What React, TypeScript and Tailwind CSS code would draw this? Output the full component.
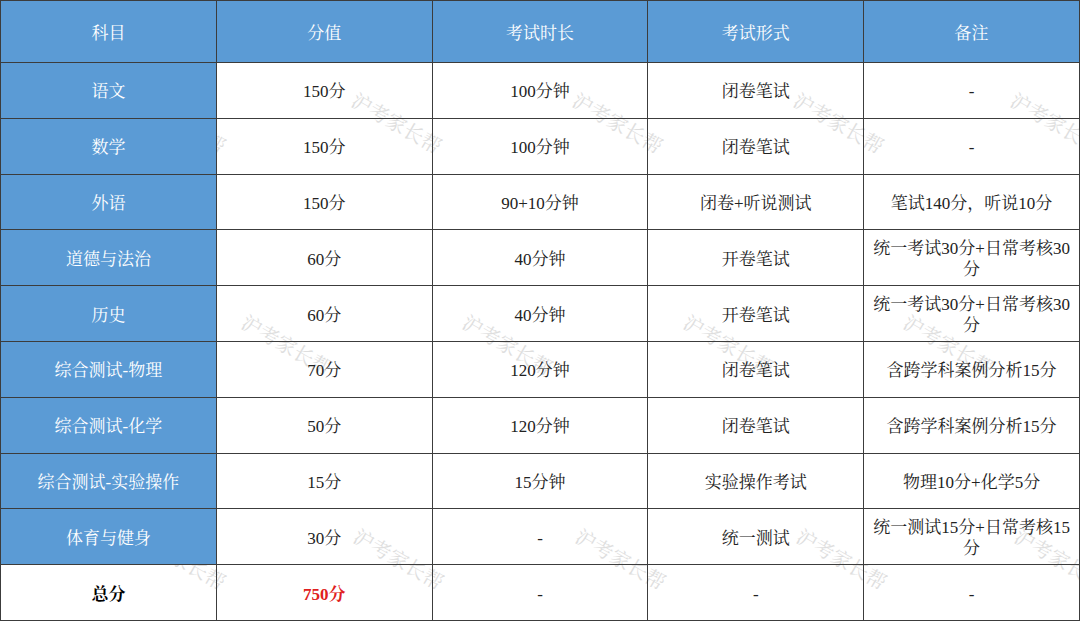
import { Fragment, type ReactNode } from "react";

const filas: { materia: string; celdas: string[] }[] = [
  { materia: "语文", celdas: ["150分", "100分钟", "闭卷笔试", "-"] },
  { materia: "数学", celdas: ["150分", "100分钟", "闭卷笔试", "-"] },
  { materia: "外语", celdas: ["150分", "90+10分钟", "闭卷+听说测试", "笔试140分，听说10分"] },
  { materia: "道德与法治", celdas: ["60分", "40分钟", "开卷笔试", "统一考试30分+日常考核30分"] },
  { materia: "历史", celdas: ["60分", "40分钟", "开卷笔试", "统一考试30分+日常考核30分"] },
  { materia: "综合测试-物理", celdas: ["70分", "120分钟", "闭卷笔试", "含跨学科案例分析15分"] },
  { materia: "综合测试-化学", celdas: ["50分", "120分钟", "闭卷笔试", "含跨学科案例分析15分"] },
  { materia: "综合测试-实验操作", celdas: ["15分", "15分钟", "实验操作考试", "物理10分+化学5分"] },
  { materia: "体育与健身", celdas: ["30分", "-", "统一测试", "统一测试15分+日常考核15分"] },
];

const cabecera = ["科目", "分值", "考试时长", "考试形式", "备注"];

// marcas de agua: punto de arranque del primer carácter, tres filas escalonadas
const marcas: [number, number][] = [
  [142, 90], [358, 90], [579, 90], [800, 90], [1017, 90],
  [248, 312], [469, 312], [690, 312], [910, 312],
  [-84, 526], [142, 526], [360, 526], [582, 526], [803, 526], [1021, 526],
];

function Celda({
  children,
  azul,
  className = "",
}: {
  children: ReactNode;
  azul?: boolean;
  className?: string;
}) {
  // las celdas blancas son transparentes: la marca de agua se ve sólo ahí
  return (
    <div
      className={`flex items-center justify-center border-r border-b border-[#3c3c3c] px-2 pt-[3px] text-center text-[17px] leading-[21px] ${
        azul ? "bg-[#5b9bd5] text-white" : "text-[#222]"
      } ${className}`}
    >
      {children}
    </div>
  );
}

export default function App() {
  return (
    <div className="relative h-[621px] w-[1080px] overflow-hidden bg-white font-['Liberation_Serif','Noto_Serif_CJK_SC','Noto_Sans_CJK_SC',serif]">
      <div className="pointer-events-none absolute inset-0" aria-hidden="true">
        {marcas.map(([x, y], i) => (
          <span
            key={i}
            className="absolute origin-top-left rotate-[30deg] whitespace-nowrap text-[20px] leading-[20px] text-[#dedede]"
            style={{ left: x, top: y }}
          >
            沪考家长帮
          </span>
        ))}
      </div>

      <div className="relative grid h-full grid-cols-5 grid-rows-[62px_repeat(10,1fr)] border-t border-l border-[#3c3c3c]">
        {cabecera.map((c) => (
          <Celda key={c} azul>
            {c}
          </Celda>
        ))}
        {filas.map((f) => (
          <Fragment key={f.materia}>
            <Celda azul>{f.materia}</Celda>
            {f.celdas.map((c, i) => (
              <Celda key={i}>{c}</Celda>
            ))}
          </Fragment>
        ))}
        <Celda className="font-bold text-black">总分</Celda>
        <Celda className="font-bold text-[#e02020]">750分</Celda>
        <Celda>-</Celda>
        <Celda>-</Celda>
        <Celda>-</Celda>
      </div>
    </div>
  );
}
